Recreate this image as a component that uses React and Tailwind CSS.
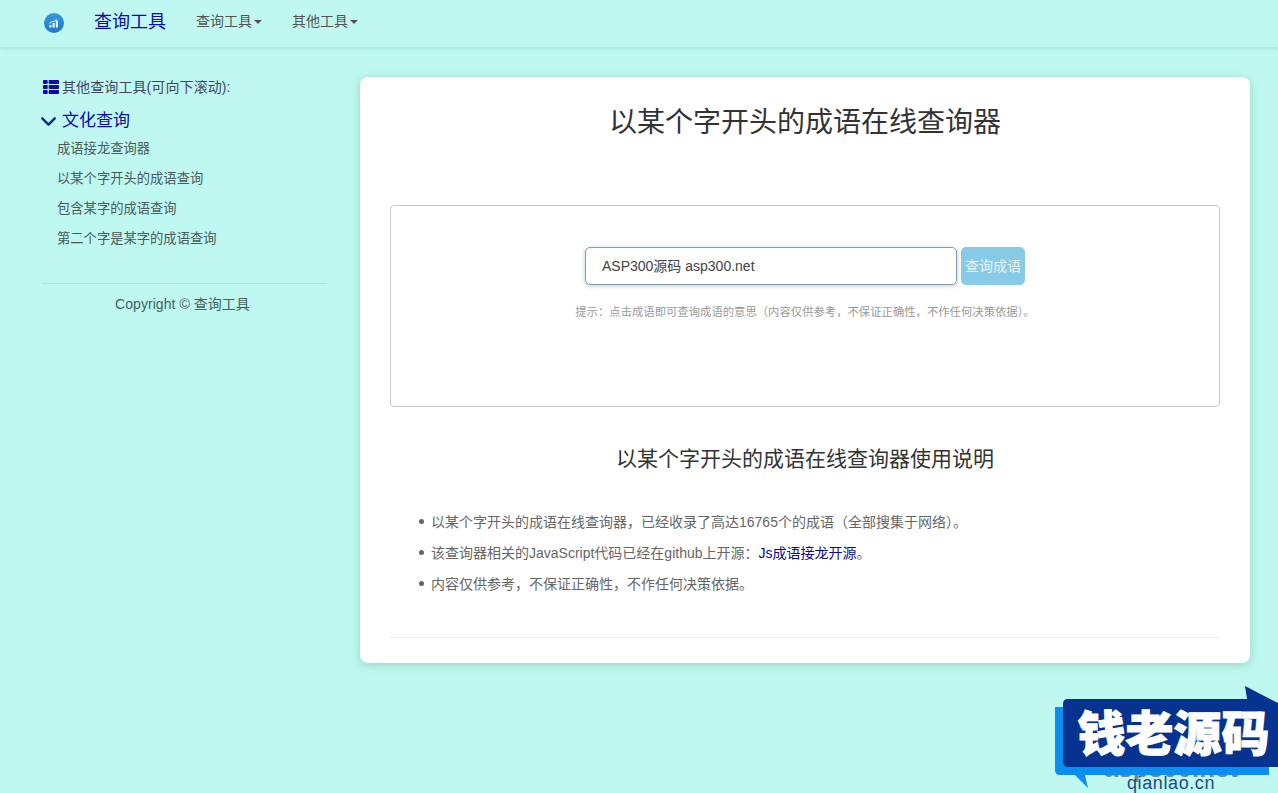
import { ChevronDown } from "lucide-react";
import { FaThList } from "react-icons/fa";

const sideLinks = [
  "成语接龙查询器",
  "以某个字开头的成语查询",
  "包含某字的成语查询",
  "第二个字是某字的成语查询",
];

const NavMenu = ({ children }) => (
  <div className="flex items-center -mt-[2px] text-sm text-[#555]">
    {children}
    <span className="w-0 h-0 ml-[2px] mt-[2px] border-x-4 border-x-transparent border-t-4 border-t-[#555]" />
  </div>
);

const Logo = () => (
  <svg width="20" height="20" viewBox="0 0 20 20" className="mt-[2px]">
    <defs>
      <linearGradient id="logoBg" x1="0" y1="0" x2="0" y2="1">
        <stop offset="0" stopColor="#3a9ad9" />
        <stop offset="1" stopColor="#1c78c8" />
      </linearGradient>
    </defs>
    <circle cx="10" cy="10" r="10" fill="url(#logoBg)" />
    <path d="M5.4 12h2v2.4h-2zM8.6 10h2v4.4h-2zM11.8 7.6h2v6.8h-2z" fill="#fff" />
    <path d="M5.4 10.4l3-2 1.6.4 2.6-2.8" stroke="#fff" strokeWidth="0.9" fill="none" />
  </svg>
);

const Watermark = () => (
  <div className="absolute right-0 bottom-0 w-[223px] h-[107px]">
    <div className="absolute left-[48px] top-[69px] w-[136px] text-center text-[26px] leading-[26px] font-bold text-[#77858a]">
      asp300.net
    </div>
    <svg width="223" height="107" viewBox="0 0 223 107" className="absolute inset-0">
      <path d="M0 21h214v68H30l3 13-13-13H5q-5 0-5-5z" fill="#0a8ef0" />
      <path d="M190 0l33 17v64H13q-5 0-5-5V18q0-5 5-5h179z" fill="#073390" />
    </svg>
    <div className="absolute left-[15px] top-[13px] w-[207px] h-[62px] flex items-center justify-center text-[48px] leading-none font-black text-white [-webkit-text-stroke:1px_white] font-['Noto_Sans_CJK_SC',sans-serif]">
      钱老源码
    </div>
    <div className="absolute left-[72px] top-[88px] text-lg leading-[19px] tracking-[0.6px] text-[#1c4a8a]">
      qianlao.cn
    </div>
  </div>
);

const ListItem = ({ children }) => (
  <li className="flex items-center h-[31px]">
    <span className="w-[5px] h-[5px] ml-[29px] mr-[7px] rounded-full bg-[#666]" />
    <span>{children}</span>
  </li>
);

export default function App() {
  return (
    <div className="relative h-[793px] overflow-hidden bg-[#bff8f0] font-['Liberation_Sans','Noto_Sans_CJK_SC',sans-serif] text-[#555]">
      <nav className="h-[48px] flex items-center pl-[44px] pb-[3px] border-b border-[#b2ebe4] shadow-[0_1px_3px_rgba(120,190,180,0.3)]">
        <Logo />
        <div className="ml-[30px] text-lg text-[#0a0aa8]">查询工具</div>
        <div className="ml-[30px]">
          <NavMenu>查询工具</NavMenu>
        </div>
        <div className="ml-[30px]">
          <NavMenu>其他工具</NavMenu>
        </div>
      </nav>

      <div className="flex pt-[29px] pl-[42px]">
        <aside className="w-[285px]">
          <div className="flex items-center h-5 text-sm tracking-[0.1px] text-[#446]">
            <FaThList className="w-4 h-4 ml-[1px] mr-[3px] text-[#0a0aa8]" />
            其他查询工具(可向下滚动):
          </div>
          <div className="flex items-center h-6 mt-[12px] text-[17px] text-[#0a0aa8]">
            <ChevronDown
              className="w-[25px] h-[25px] shrink-0 -ml-[6px] mr-[1px] text-[#062a8c]"
              strokeWidth={2.3}
            />
            文化查询
          </div>
          <ul className="mt-[1px] pl-[15px] text-[13.3px] text-[#4a5a5a]">
            {sideLinks.map((link) => (
              <li key={link} className="h-[30px] leading-[30px]">
                {link}
              </li>
            ))}
          </ul>
          <hr className="mt-[29px] border-[#aee6de]" />
          <div className="mt-[10px] pr-[4px] text-center text-sm tracking-[0.05px] leading-5 text-[#446060]">
            Copyright © 查询工具
          </div>
        </aside>

        <main className="w-[890px] ml-[33px] px-[30px] pt-[31px] pb-[25px] bg-white rounded-lg shadow-[0_2px_10px_rgba(90,170,160,0.45)]">
          <h1 className="text-center text-[28px] leading-[30px] text-[#333]">
            以某个字开头的成语在线查询器
          </h1>

          <div className="mt-[67px] h-[202px] pt-[41px] border border-[#c4c8c8] rounded">
            <div className="flex justify-center gap-1">
              <input
                defaultValue="ASP300源码 asp300.net"
                readOnly
                className="w-[372px] h-[38px] px-4 pb-[2px] text-sm text-[#444] border border-[#8a9aa0] rounded-[5px] outline-none shadow-[0_1px_4px_rgba(100,170,210,0.55)]"
              />
              <button className="w-16 h-[38px] text-sm text-[#e4f4fb] bg-[#87cbe6] rounded-[5px]">
                查询成语
              </button>
            </div>
            <p className="mt-[19px] text-center text-[11.35px] leading-4 text-[#999]">
              提示：点击成语即可查询成语的意思（内容仅供参考，不保证正确性，不作任何决策依据）。
            </p>
          </div>

          <h2 className="mt-[37px] text-center text-[21px] leading-[30px] text-[#333]">
            以某个字开头的成语在线查询器使用说明
          </h2>

          <ul className="mt-[32px] text-sm text-[#666]">
            <ListItem>以某个字开头的成语在线查询器，已经收录了高达16765个的成语（全部搜集于网络）。</ListItem>
            <ListItem>
              该查询器相关的JavaScript代码已经在github上开源：
              <a className="text-[#0a0a90]">Js成语接龙开源</a>。
            </ListItem>
            <ListItem>内容仅供参考，不保证正确性，不作任何决策依据。</ListItem>
          </ul>

          <hr className="mt-[38px] border-[#eee]" />
        </main>
      </div>

      <Watermark />
    </div>
  );
}
